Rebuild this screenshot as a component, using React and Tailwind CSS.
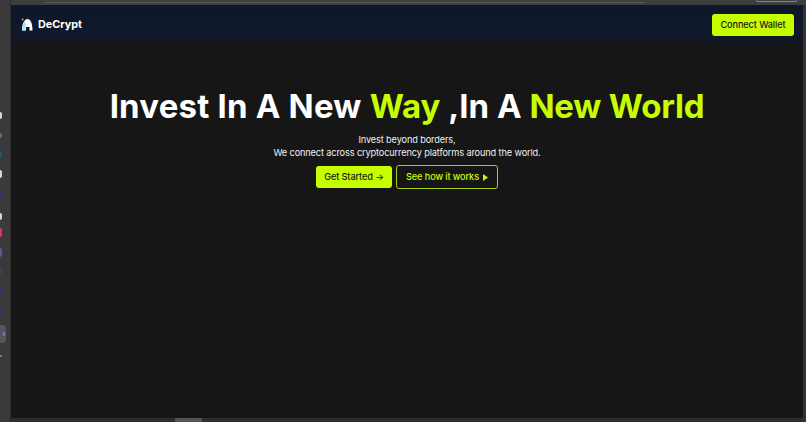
import React from 'react';

const Logo = () => (
  <svg width="12" height="13" viewBox="0 0 12 13">
    <path d="M1 12.5 C1 6 3 1.5 6.5 1 C9.5 1 11.5 5 11.5 12.5 L8.5 12.5 L8.5 9 L5 9 L5 12.5 Z" fill="#ffffff" />
    <path d="M1 12.5 C1 8 2 5 3.5 3 L5 6 L4 12.5 Z" fill="#a8e2f2" />
    <circle cx="1.6" cy="1.4" r="1" fill="#e0a030" />
  </svg>
);

const dockIcons = [
  { color: 'bg-[#d8d8d8]', size: 'h-[7px]', gap: 'mt-[112px]' },
  { color: 'bg-[#6f7340]', size: 'h-[5px]', gap: 'mt-[14px]' },
  { color: 'bg-[#1d5a7e]', size: 'h-[5px]', gap: 'mt-[14px]' },
  { color: 'bg-[#d8d8d8]', size: 'h-[8px]', gap: 'mt-[13px]' },
  { color: 'bg-[#33346e]', size: 'h-[7px]', gap: 'mt-[14px]' },
  { color: 'bg-[#d8d8d8]', size: 'h-[7px]', gap: 'mt-[14px]' },
  { color: 'bg-[#d92f7c]', size: 'h-[9px]', gap: 'mt-[8px]' },
  { color: 'bg-[#5f5a88]', size: 'h-[9px]', gap: 'mt-[11px]' },
  { color: 'bg-[#3f3c74]', size: 'h-[7px]', gap: 'mt-[11px]' },
  { color: 'bg-[#33346e]', size: 'h-[7px]', gap: 'mt-[13px]' },
  { color: 'bg-[#33346e]', size: 'h-[7px]', gap: 'mt-[13px]' },
];

const App = () => {
  return (
    <div className="w-[806px] h-[422px] flex overflow-hidden bg-[#3a3a3a] font-['Inter',sans-serif]">
      <div className="w-[11px] shrink-0 flex flex-col items-start border-r border-[#2a2a2a]">
        {dockIcons.map((d, i) => (
          <div key={i} className={`w-[2px] rounded-r-full ${d.color} ${d.size} ${d.gap}`} />
        ))}
        <div className="mt-[10px] w-[6px] h-[18px] rounded-r-[3px] bg-[#55555a] flex items-center justify-end pr-[1px]">
          <div className="w-[2px] h-[4px] bg-[#7c6cc4]" />
        </div>
        <div className="mt-[12px] w-[2px] h-[2px] bg-[#777777]" />
      </div>

      <div className="flex-1 flex flex-col min-w-0">
        {/* browser chrome strip */}
        <div className="h-[5px] shrink-0 bg-[#3e3e3e] flex items-start">
          <div className="ml-[34px] w-[601px] h-[3px] border-b border-[#5a5a5a] rounded-br-[3px]" />
          <div className="ml-[110px] w-[41px] h-[2px] border-b border-x border-[#85859a] rounded-b-[3px]" />
        </div>
        <div className="flex-1 flex min-h-0">
          <div className="flex-1 flex flex-col bg-[#161616] min-w-0">
            <nav className="h-[39px] shrink-0 flex items-center justify-between pl-[10px] pr-[9px] bg-gradient-to-b from-[#0e1729] via-[#10182b] via-80% to-[#15161a]">
              <div className="flex items-center gap-[5px]">
                <Logo />
                <span className="text-[10.8px] leading-none pt-[2px] font-bold text-white">DeCrypt</span>
              </div>
              <button className="h-[22px] w-[82px] rounded-[3px] bg-[#c6fe00] text-[9.2px] tracking-[-0.12px] font-medium text-[#1a1a1a]">
                Connect Wallet
              </button>
            </nav>

            <main className="flex flex-col items-center pt-[40px]">
              <h1 className="text-[33px] leading-[44px] font-bold text-white whitespace-nowrap">
                <span className="tracking-[0.2px]">Invest In A New </span>
                <span className="text-[#c6fe00]">Way</span> ,In A <span className="text-[#c6fe00] tracking-[-0.2px]">New World</span>
              </h1>
              <p className="mt-[5px] text-[9.2px] tracking-[-0.13px] leading-[13px] text-[#f0f0f0] text-center">
                Invest beyond borders,
                <br />
                We connect across cryptocurrency platforms around the world.
              </p>
              <div className="mt-[6px] flex items-center gap-[4px]">
                <button className="h-[22px] w-[76px] rounded-[3px] bg-[#c6fe00] text-[9.2px] tracking-[-0.12px] font-medium text-[#1a1a1a]">
                  Get Started →
                </button>
                <button className="h-[24px] w-[102px] rounded-[3px] border-[1.5px] border-[#a6cf10] text-[9.2px] tracking-[-0.12px] font-medium text-[#c6fe00] flex items-center justify-center gap-[4px]">
                  See how it works
                  <svg width="5" height="7" viewBox="0 0 5 7"><path d="M0 0 L5 3.5 L0 7 Z" fill="#c6fe00" /></svg>
                </button>
              </div>
            </main>

            <div className="flex-1" />
            <div className="h-[4px] shrink-0 bg-[#2e2e2e] flex">
              <div className="ml-[164px] w-[27px] bg-[#555555]" />
            </div>
          </div>
          <div className="w-[3px] shrink-0 bg-[#333333]" />
        </div>
      </div>
    </div>
  );
};

export default App;
